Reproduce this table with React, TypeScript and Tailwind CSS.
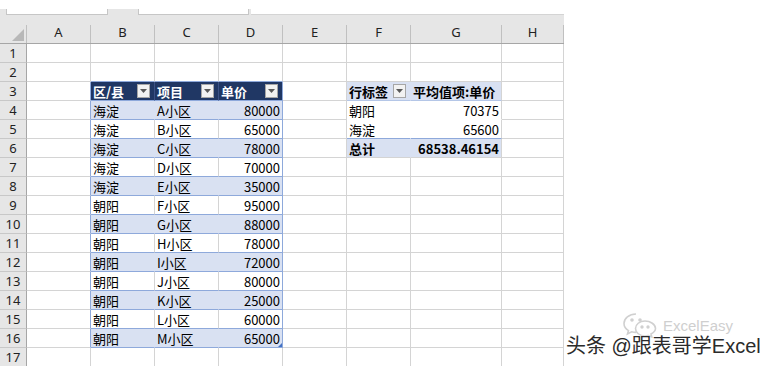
import React from 'react';

const widths = ['w-[64px]', 'w-[64px]', 'w-[64px]', 'w-[64px]', 'w-[64px]', 'w-[64px]', 'w-[91px]', 'w-[62px]'];
const letters = ['A', 'B', 'C', 'D', 'E', 'F', 'G', 'H'];

const data: Array<[string, string, string]> = [
  ['海淀', 'A小区', '80000'],
  ['海淀', 'B小区', '65000'],
  ['海淀', 'C小区', '78000'],
  ['海淀', 'D小区', '70000'],
  ['海淀', 'E小区', '35000'],
  ['朝阳', 'F小区', '95000'],
  ['朝阳', 'G小区', '88000'],
  ['朝阳', 'H小区', '78000'],
  ['朝阳', 'I小区', '72000'],
  ['朝阳', 'J小区', '80000'],
  ['朝阳', 'K小区', '25000'],
  ['朝阳', 'L小区', '60000'],
  ['朝阳', 'M小区', '65000'],
];

const pivot: Record<number, [string, string, boolean]> = {
  4: ['朝阳', '70375', false],
  5: ['海淀', '65600', false],
  6: ['总计', '68538.46154', true],
};

const Dropdown = () => (
  <span className="mr-[2px] flex h-[14px] w-[13px] shrink-0 items-center justify-center border border-[#a6a6a6] bg-[#f2f2f2]">
    <svg width="7" height="4" viewBox="0 0 7 4">
      <path d="M0 0 L7 0 L3.5 4 Z" fill="#595959" />
    </svg>
  </span>
);

type CellProps = {
  col: number;
  className?: string;
  children?: React.ReactNode;
};

const Cell = ({ col, className, children }: CellProps) => (
  <div className={`${widths[col]} flex h-full shrink-0 items-center overflow-hidden whitespace-nowrap border-r border-b px-[2px] ${className ?? 'border-[#d4d4d4]'}`}>
    {children}
  </div>
);

const Row = ({ n }: { n: number }) => {
  const cells: React.ReactNode[] = [];
  const item = n >= 4 && n <= 16 ? data[n - 4] : null;
  const banded = item !== null && n % 2 === 0;
  const p = pivot[n];

  for (let c = 0; c < 8; c++) {
    // column A: right edge is the table's left border
    if (c === 0) {
      cells.push(
        <Cell key={c} col={c} className={n >= 3 && n <= 16 ? 'border-r-[#8ea9db] border-b-[#d4d4d4]' : 'border-[#d4d4d4]'} />
      );
      continue;
    }
    if (c >= 1 && c <= 3) {
      const last = c === 3;
      if (n === 2) {
        cells.push(<Cell key={c} col={c} className="border-r-[#d4d4d4] border-b-[#8ea9db]" />);
        continue;
      }
      if (n === 3) {
        const label = ['区/县', '项目', '单价'][c - 1];
        cells.push(
          <Cell key={c} col={c} className={`justify-between bg-[#203764] font-bold text-white border-b-[#8ea9db] ${last ? 'border-r-[#8ea9db]' : 'border-r-[#3b5286]'}`}>
            <span>{label}</span>
            <Dropdown />
          </Cell>
        );
        continue;
      }
      if (item) {
        const bg = banded ? 'bg-[#d9e1f2]' : 'bg-white';
        const right = last ? 'border-r-[#8ea9db]' : banded ? 'border-r-[#d9e1f2]' : 'border-r-[#d4d4d4]';
        cells.push(
          <Cell key={c} col={c} className={`relative ${bg} ${right} border-b-[#8ea9db] ${last ? 'justify-end' : ''}`}>
            {item[c - 1]}
            {last && n === 16 && (
              <span className="absolute bottom-0 right-0 h-0 w-0 border-b-[4px] border-l-[4px] border-b-[#4472c4] border-l-transparent" />
            )}
          </Cell>
        );
        continue;
      }
    }
    if ((c === 5 || c === 6) && n >= 3 && n <= 6) {
      if (n === 3) {
        cells.push(
          c === 5 ? (
            <Cell key={c} col={c} className="justify-between bg-[#d9e1f2] font-bold border-r-[#d9e1f2] border-b-[#b4c6e7]">
              <span>行标签</span>
              <Dropdown />
            </Cell>
          ) : (
            <Cell key={c} col={c} className="bg-[#d9e1f2] font-bold border-r-[#d4d4d4] border-b-[#b4c6e7]">
              平均值项:单价
            </Cell>
          )
        );
        continue;
      }
      const [label, value, total] = p;
      const bg = total ? 'bg-[#d9e1f2] font-bold' : 'bg-white';
      const bottom = n === 4 ? 'border-b-white' : n === 5 ? 'border-b-[#8ea9db]' : 'border-b-[#d4d4d4]';
      cells.push(
        c === 5 ? (
          <Cell key={c} col={c} className={`${bg} ${bottom} ${total ? 'border-r-[#d9e1f2]' : 'border-r-white'}`}>
            {label}
          </Cell>
        ) : (
          <Cell key={c} col={c} className={`justify-end ${bg} ${bottom} border-r-[#d4d4d4]`}>
            {value}
          </Cell>
        )
      );
      continue;
    }
    cells.push(<Cell key={c} col={c} />);
  }

  return (
    <div className="flex h-[19px]">
      <div className="flex h-full w-[27px] shrink-0 items-center justify-center border-r border-b border-r-[#a6a6a6] border-b-[#c8c8c8] bg-[#e6e6e6] font-['Noto_Sans',sans-serif] text-[13px] text-[#222]">
        {n}
      </div>
      {cells}
    </div>
  );
};

const WeChatMark = () => (
  <svg width="34" height="26" viewBox="0 0 34 26" fill="none" stroke="#d0d0d0" strokeWidth="1.6">
    <path d="M13 2 C6 2 1 6.5 1 11.5 C1 14.5 2.8 17 5.5 18.6 L4.5 22 L8.6 19.8 C10 20.2 11.4 20.4 13 20.4" />
    <path d="M22 9 C16.5 9 12.5 12.5 12.5 16.5 C12.5 20.5 16.5 24 22 24 C23.2 24 24.4 23.8 25.4 23.5 L28.8 25 L28 22 C30.7 20.5 32.5 18.7 32.5 16.5 C32.5 12.5 27.5 9 22 9 Z" />
    <circle cx="9" cy="8" r="1" fill="#d0d0d0" />
    <circle cx="17" cy="8" r="1" fill="#d0d0d0" />
    <circle cx="19" cy="15" r="0.9" fill="#d0d0d0" />
    <circle cx="25" cy="15" r="0.9" fill="#d0d0d0" />
  </svg>
);

export default function App() {
  const rows = Array.from({ length: 17 }, (_, i) => i + 1);

  return (
    <div className="relative h-[366px] w-[773px] overflow-hidden bg-white font-['Noto_Sans_CJK_SC','Noto_Sans',sans-serif] text-[13px] leading-none text-black">
      <div className="w-[564px]">
        {/* Tab strip */}
        <div className="h-[9px] bg-white" />
        <div className="flex h-[6px] bg-[#e6e6e6]">
          <div className="w-[6px]" />
          <div className="w-[102px] border-x border-b border-[#c6c6c6] bg-white" />
          <div className="w-[30px]" />
          <div className="w-[111px] border-x border-b border-[#c6c6c6] bg-white" />
          <div className="w-[2px]" />
          <div className="flex-1 border-b border-[#d4d4d4] bg-white" />
        </div>

        {/* Column headers */}
        <div className="flex h-[29px] items-end border-b border-[#a6a6a6] bg-[#e6e6e6]">
          <div className="relative h-[18px] w-[27px] shrink-0 border-r border-[#c0c0c0]">
            <svg className="absolute bottom-[2px] right-[2px]" width="12" height="12" viewBox="0 0 12 12">
              <path d="M12 0 L12 12 L0 12 Z" fill="#b8b8b8" />
            </svg>
          </div>
          {letters.map((l, i) => (
            <div
              key={l}
              className={`${widths[i]} flex h-[18px] shrink-0 items-center justify-center border-r border-[#c0c0c0] pb-[3px] font-['Noto_Sans',sans-serif] text-[13px] text-[#222]`}
            >
              {l}
            </div>
          ))}
        </div>

        {rows.map((n) => (
          <Row key={n} n={n} />
        ))}
      </div>

      {/* Watermark */}
      <div className="absolute left-[623px] top-[312px] flex items-center gap-[6px]">
        <WeChatMark />
        <span className="font-['Liberation_Sans',sans-serif] text-[15px] leading-[15px] text-[#cfcfcf]">ExcelEasy</span>
      </div>
      <div className="absolute left-[566px] top-[336px] whitespace-nowrap font-['Liberation_Sans','Noto_Sans_CJK_SC',sans-serif] text-[20px] leading-[20px] text-[#2b2b2b] [text-shadow:0_0_2px_#fff]">
        头条 @跟表哥学Excel
      </div>
    </div>
  );
}
